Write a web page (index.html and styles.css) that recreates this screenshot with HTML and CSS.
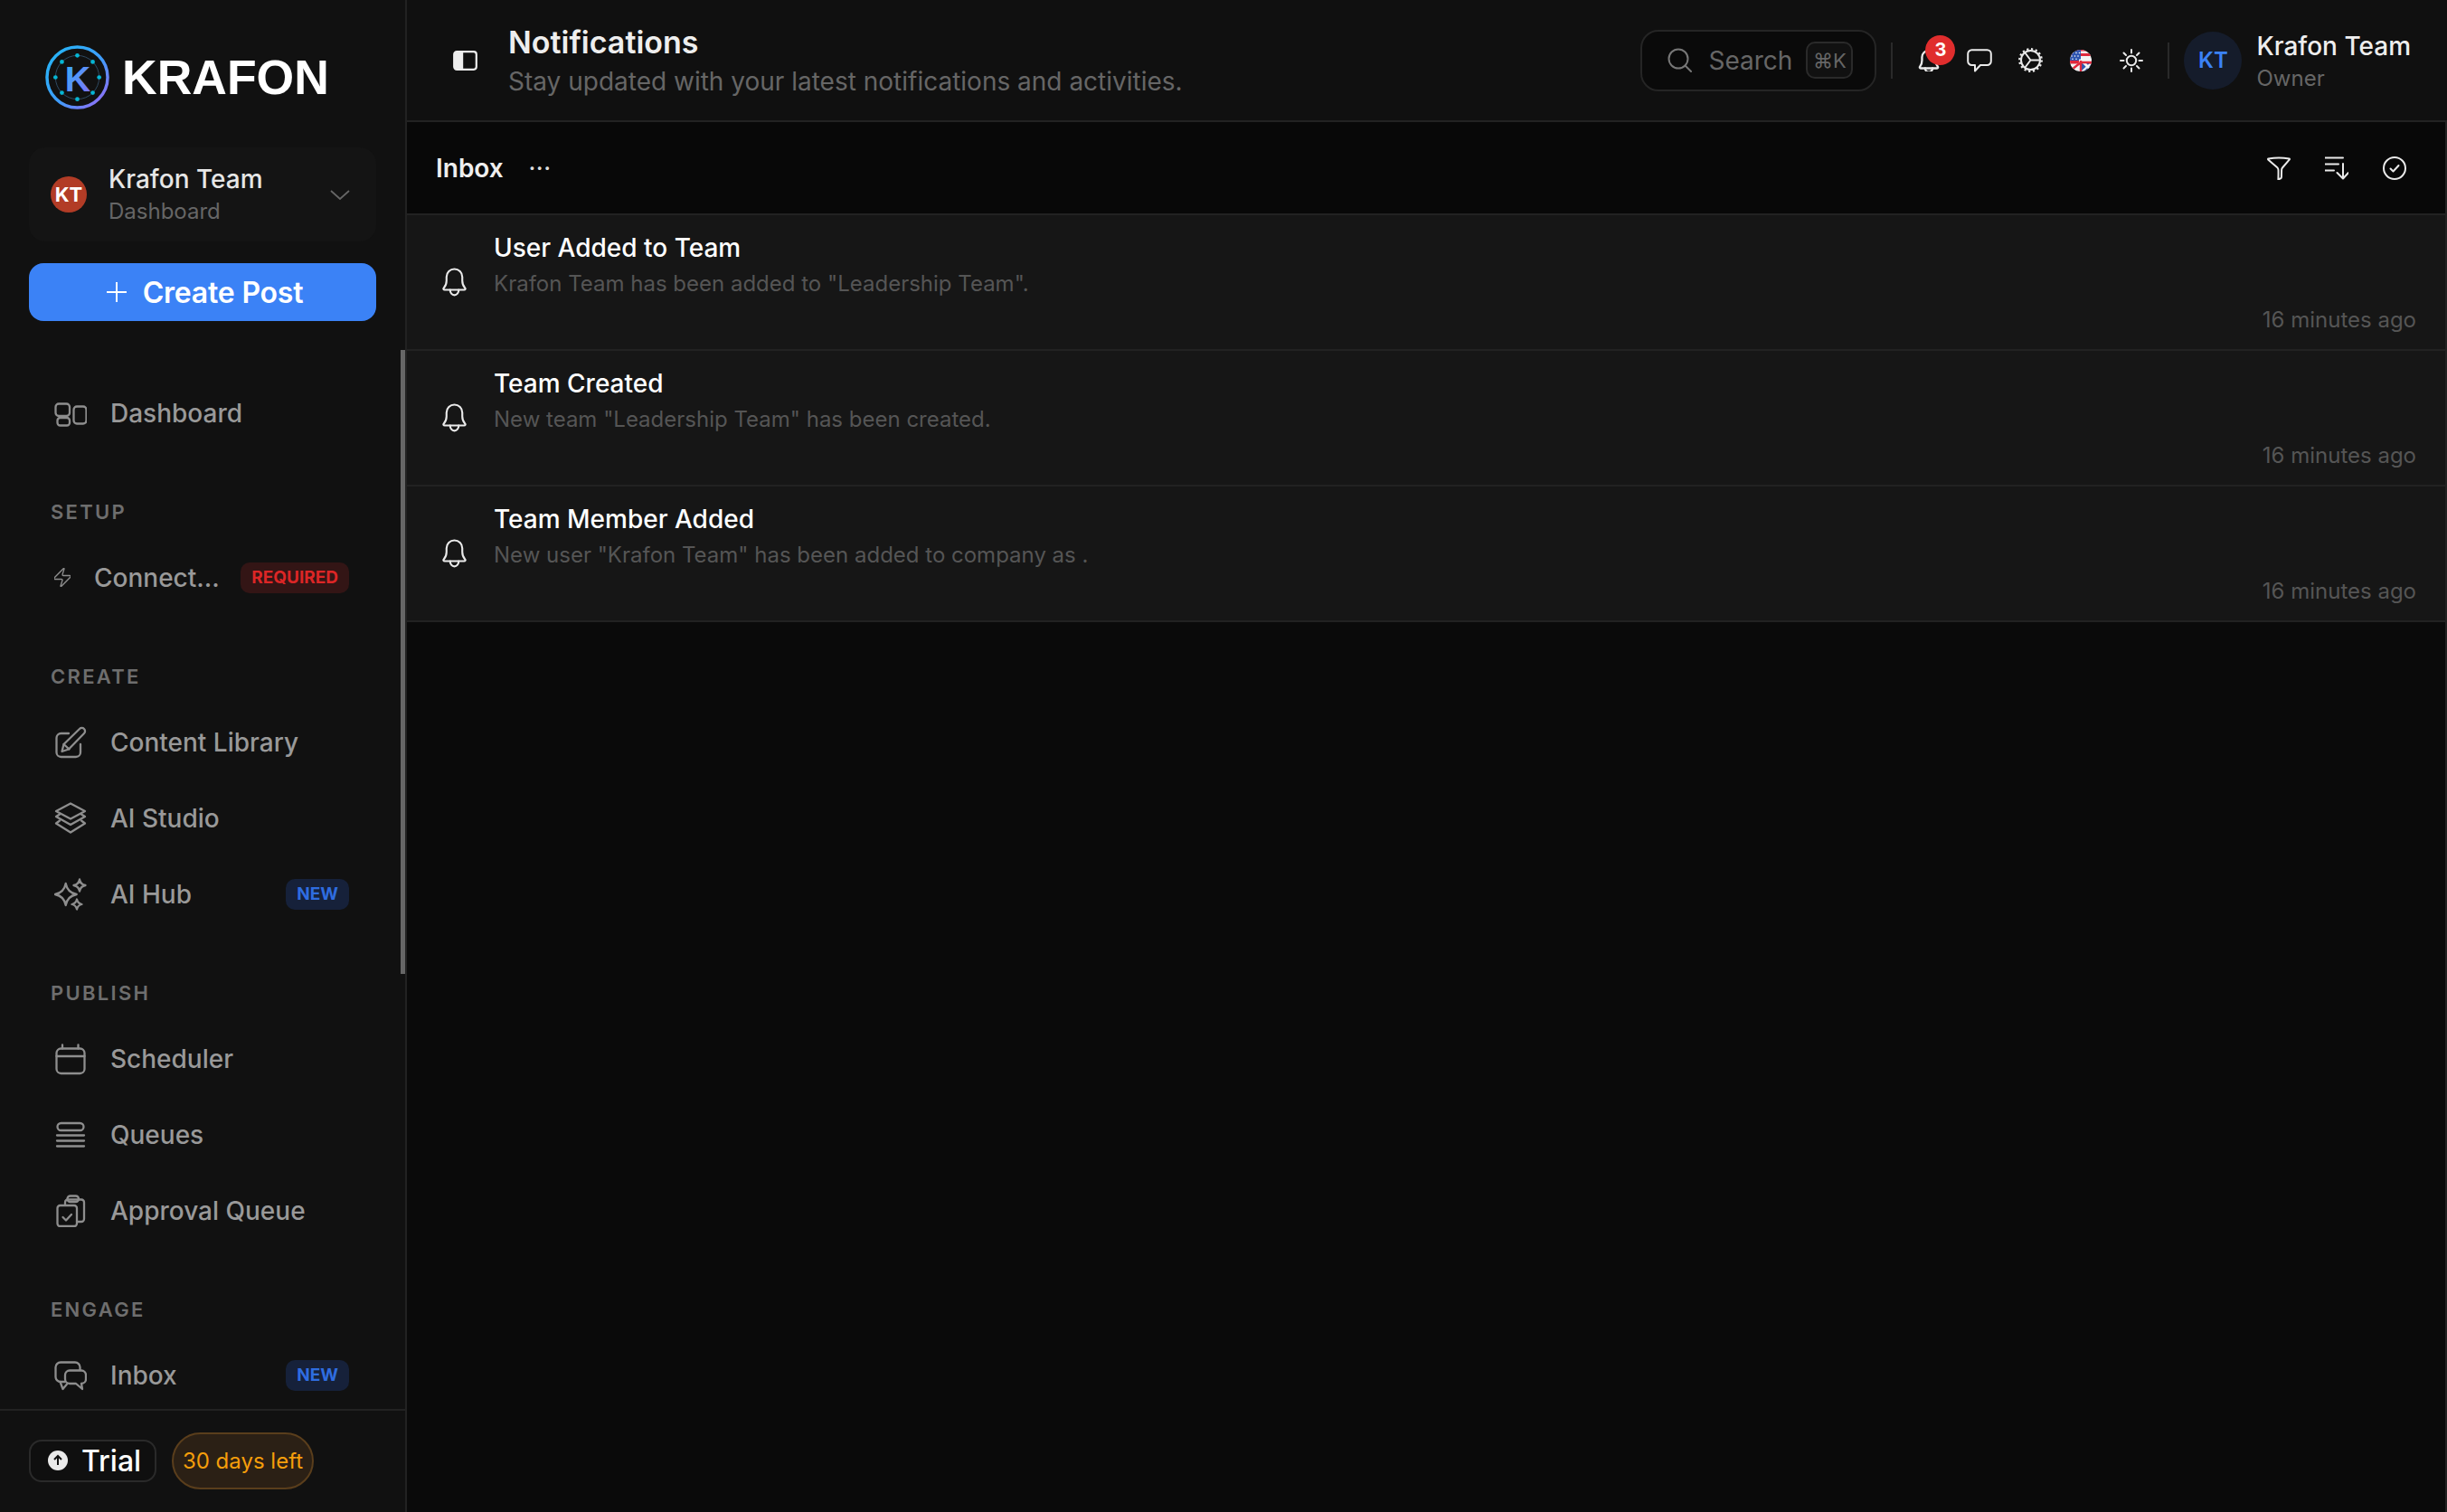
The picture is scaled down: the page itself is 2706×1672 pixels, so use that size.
FILE: index.html
```html
<!DOCTYPE html>
<html lang="en">
<head>
<meta charset="utf-8">
<title>Notifications</title>
<link rel="stylesheet" href="styles.css">
</head>
<body>
<div class="app">
  <aside class="sidebar">
    <div class="scrollbar"></div>
    <div class="brand">
      <svg class="logo" viewBox="0 0 72 72">
        <defs>
          <linearGradient id="ring" x1="0" y1="0" x2="1" y2="1"><stop offset="0" stop-color="#22b8f5"/><stop offset="0.55" stop-color="#3f9cfb"/><stop offset="1" stop-color="#a066f5"/></linearGradient>
          <linearGradient id="kay" x1="0" y1="0" x2="1" y2="1"><stop offset="0" stop-color="#2cb4f8"/><stop offset="1" stop-color="#8a6cf8"/></linearGradient>
        </defs>
        <circle cx="36" cy="36" r="34" class="logo-ring"/>
        <circle cx="36" cy="36" r="24.500" class="logo-orbit"/>
        <g class="logo-dots">
          <circle cx="36" cy="11.500" r="2.400"/><circle cx="53.300" cy="18.700" r="2.400"/><circle cx="60.500" cy="36" r="2.400"/><circle cx="53.300" cy="53.300" r="2.400"/><circle cx="36" cy="60.500" r="2.400"/><circle cx="18.700" cy="53.300" r="2.400"/><circle cx="11.500" cy="36" r="2.400"/><circle cx="18.700" cy="18.700" r="2.400"/>
        </g>
        <text x="36.500" y="52" text-anchor="middle" class="logo-k">K</text>
      </svg>
      <span class="wordmark">KRAFON</span>
    </div>
    <div class="team-card">
      <span class="team-avatar">KT</span>
      <div class="team-text">
        <div class="team-name">Krafon Team</div>
        <div class="team-sub">Dashboard</div>
      </div>
      <svg class="chevron" viewBox="0 0 22 11"><path d="M1 1l10 9 10-9"/></svg>
    </div>
    <button class="create-btn"><svg class="plus" viewBox="0 0 22 22"><path d="M11 0v22M0 11h22"/></svg>Create Post</button>
    <nav class="nav">
      <a class="nav-row">
        <svg class="nav-icon" viewBox="0 0 36 36"><rect x="1.500" y="7.500" width="15.500" height="13.500" rx="3.500"/><rect x="3.500" y="23" width="13.500" height="8.500" rx="3"/><rect x="21.500" y="10.500" width="14" height="19" rx="3.500"/></svg>
        <span>Dashboard</span>
      </a>
      <div class="nav-label">SETUP</div>
      <a class="nav-row">
        <svg class="bolt" viewBox="3 1.500 18 21"><path d="M4 14a1 1 0 0 1-.78-1.630l9.900-10.200a.5.5 0 0 1 .86.460l-1.920 6.020A1 1 0 0 0 13 10h7a1 1 0 0 1 .78 1.630l-9.900 10.200a.5.5 0 0 1-.86-.460l1.920-6.020A1 1 0 0 0 11 14z"/></svg>
        <span>Connect...</span>
        <span class="tag tag-red">REQUIRED</span>
      </a>
      <div class="nav-label">CREATE</div>
      <a class="nav-row">
        <svg class="nav-icon" viewBox="0 0 36 36"><path d="M16 8H7.500a5 5 0 0 0-5 5v16a5 5 0 0 0 5 5H24a5 5 0 0 0 5-5v-9"/><path d="M8.500 28l2-8L28 3a3.500 3.500 0 0 1 5 5L16 25.500z"/><path d="M10.500 20l6 5.500"/></svg>
        <span>Content Library</span>
      </a>
      <a class="nav-row">
        <svg class="nav-icon" viewBox="0 0 36 36"><path d="M18 1.500L34 10 18 18.500 2 10z"/><path d="M6 13.500L2 16l16 9 16-9-4-2.500"/><path d="M6 20.500L2 23.500 18 33.500l16-10-4-3"/></svg>
        <span>AI Studio</span>
      </a>
      <a class="nav-row">
        <svg class="nav-icon" viewBox="0 0 36 36"><path d="M12.700 6Q14.500 16 24.700 18 14.500 20 12.700 30 10.900 20 .9 18 10.900 16 12.700 6z"/><path d="M28 1.500Q29 7 34.500 8 29 9 28 14.500 27 9 21.500 8 27 7 28 1.500z"/><path d="M25 23.500Q26 28 30.500 29 26 30 25 34.500 24 30 19.500 29 24 28 25 23.500z"/></svg>
        <span>AI Hub</span>
        <span class="tag tag-blue">NEW</span>
      </a>
      <div class="nav-label">PUBLISH</div>
      <a class="nav-row">
        <svg class="nav-icon" viewBox="0 0 36 36"><rect x="2.500" y="6.500" width="31" height="27.500" rx="5"/><path d="M2.500 15h31M9 2.500v4M26.500 2.500v4"/></svg>
        <span>Scheduler</span>
      </a>
      <a class="nav-row">
        <svg class="nav-icon" viewBox="0 0 36 36"><rect x="3.500" y="5" width="29" height="8" rx="4"/><path d="M3 18.500h30M3 24.500h30M3 30.500h30"/></svg>
        <span>Queues</span>
      </a>
      <a class="nav-row">
        <svg class="nav-icon" viewBox="0 0 36 36"><rect x="3.500" y="12" width="21.500" height="23" rx="3"/><path d="M9.500 25l3.500 3.500 6-6.500"/><path d="M12 11.500V8.500a3 3 0 0 1 3-3h15a3 3 0 0 1 3 3V27a3 3 0 0 1-3 3h-5"/><rect x="14.500" y="1.500" width="12.500" height="6.500" rx="3.200"/></svg>
        <span>Approval Queue</span>
      </a>
      <div class="nav-label">ENGAGE</div>
      <a class="nav-row">
        <svg class="nav-icon" viewBox="0 0 36 36"><path d="M12 25H7a5.500 5.500 0 0 1-5.500-5.500V9A5.500 5.500 0 0 1 7 3.500h16A5.500 5.500 0 0 1 28.500 9v3"/><path d="M6.500 25l3 8 5-6"/><path d="M17 12.500h13a5 5 0 0 1 5 5V22a5 5 0 0 1-5 5l1 6-7-6h-7a5 5 0 0 1-5-5v-4.500a5 5 0 0 1 5-5z"/></svg>
        <span>Inbox</span>
        <span class="tag tag-blue">NEW</span>
      </a>
    </nav>
    <div class="sidebar-foot">
      <span class="trial"><svg class="trial-icon" viewBox="0 0 22 22"><circle cx="11" cy="11" r="11" class="trial-disc"/><path d="M11 16V6.500M7 10l4-4 4 4" class="trial-arrow"/></svg>Trial</span>
      <span class="days">30 days left</span>
    </div>
  </aside>
  <div class="content">
    <header class="topbar">
      <svg class="panel-icon" viewBox="0 0 27 22"><rect x="1.200" y="1.200" width="24.600" height="19.600" rx="3"/><path d="M1.200 4.200a3 3 0 0 1 3-3h7v19.600h-7a3 3 0 0 1-3-3z" class="panel-fill"/></svg>
      <div class="page-head">
        <h1 class="page-title">Notifications</h1>
        <p class="page-sub">Stay updated with your latest notifications and activities.</p>
      </div>
      <div class="top-right">
        <div class="search">
          <svg class="search-icon" viewBox="0 0 27 27"><circle cx="12" cy="12" r="10.500"/><path d="M19.500 19.500L26 26"/></svg>
          <span class="search-text">Search</span>
          <kbd class="kbd">⌘K</kbd>
        </div>
        <span class="divider"></span>
        <div class="top-icons">
          <span class="top-icon bell-wrap">
            <svg class="line-icon bell-small" viewBox="2.500 1.500 19 21.500"><path d="M3.500 18.500c1.400-1.600 2-3 2-6V9.500a6.500 6.500 0 0 1 13 0v3c0 3 .6 4.400 2 6 .5.600.2 1.500-.7 1.500H4.200c-.9 0-1.200-.9-.7-1.500z"/><path d="M8.500 20a3.500 3.500 0 0 0 7 0"/></svg>
            <span class="badge">3</span>
          </span>
          <span class="top-icon">
            <svg class="line-icon chat" viewBox="0 0 28 26"><path d="M5.500 1.200h17a4.300 4.300 0 0 1 4.300 4.300v8.200a4.300 4.300 0 0 1-4.300 4.300h-7.500l-6 6.500v-6.500H5.500a4.300 4.300 0 0 1-4.300-4.300V5.500a4.300 4.300 0 0 1 4.300-4.300z"/></svg>
          </span>
          <span class="top-icon">
            <svg class="line-icon gear" viewBox="0 0 27 27"><circle cx="13.500" cy="13.500" r="10.500"/><circle cx="13.500" cy="13.500" r="12.200" class="gear-teeth"/><path d="M13.500 13.500H24M13.500 13.500L7.500 5.500M13.500 13.500L7.500 21.500"/></svg>
          </span>
          <span class="top-icon">
            <svg class="flag" viewBox="0 0 24 24">
              <defs><clipPath id="flagclip"><circle cx="12" cy="12" r="12"/></clipPath></defs>
              <g clip-path="url(#flagclip)">
                <rect width="24" height="24" class="f-white"/>
                <rect y="4" width="24" height="3" class="f-red"/>
                <rect y="0" width="24" height="1.500" class="f-red"/>
                <rect y="12" width="24" height="3.500" class="f-red"/>
                <rect width="12" height="12" class="f-blue"/>
                <path d="M12 24L24 13H12zM24 24V16l-9 8z" class="f-blue"/>
                <path d="M10 12h14M13 12l11 11M13 12l-8 12M0 18l7 3" class="f-white-line"/>
                <path d="M12 12v12M12 14h12M12 14l-10 8" class="f-red-line"/>
                <g class="f-stars"><circle cx="3" cy="3.500" r=".8"/><circle cx="7" cy="3.500" r=".8"/><circle cx="10.500" cy="3.500" r=".8"/><circle cx="2" cy="7" r=".8"/><circle cx="5.500" cy="7" r=".8"/><circle cx="9" cy="7" r=".8"/><circle cx="3" cy="10.200" r=".8"/><circle cx="7" cy="10.200" r=".8"/></g>
              </g>
            </svg>
          </span>
          <span class="top-icon">
            <svg class="line-icon sun" viewBox="0 0 26 26"><circle cx="13" cy="13" r="5.200"/><path d="M13 1v3.500M13 21.500V25M1 13h3.500M21.500 13H25M4.500 4.500l2.500 2.500M19 19l2.500 2.500M4.500 21.500L7 19M19 7l2.500-2.500"/></svg>
          </span>
        </div>
        <span class="divider"></span>
        <div class="profile">
          <span class="profile-avatar">KT</span>
          <div class="profile-text">
            <div class="profile-name">Krafon Team</div>
            <div class="profile-role">Owner</div>
          </div>
        </div>
      </div>
    </header>
    <main class="main">
      <div class="toolbar">
        <span class="inbox-title">Inbox</span>
        <span class="inbox-more">···</span>
        <div class="tool-icons">
          <svg class="line-icon tool" viewBox="0 0 26 26"><path d="M1.500 2.500c7-1.300 16-1.300 23 0 .5.100.6.500.3.900L17 12.500c-.6.700-.9 1.500-.9 2.500l-.2 8c0 .8-.4 1.200-1.200 1.500l-2.300 1c.1-3 .2-7 .1-10.500 0-1-.3-1.700-.9-2.400L1.200 3.400c-.3-.4-.2-.8.3-.9z"/></svg>
          <svg class="line-icon tool" viewBox="0 0 26 26"><path d="M.5 1.500H20M.5 8.500H15M.5 15.500H10M20 8v16M13.500 18l6.500 6.500 6-6.500"/></svg>
          <svg class="line-icon tool" viewBox="0 0 26 26"><circle cx="13" cy="13" r="12"/><path d="M8.500 13.500l3 3 6-6.500"/></svg>
        </div>
      </div>
      <section class="note">
        <svg class="line-icon note-bell" viewBox="3 1.500 25 31"><path d="M4.500 23.500c1.800-2 2.800-4 2.800-7.500V12a8.200 8.200 0 0 1 16.400 0v4c0 3.500 1 5.500 2.800 7.500.8.900.3 2-.9 2H5.400c-1.200 0-1.700-1.100-.9-2z"/><path d="M11 25.500a4.500 5.500 0 0 0 9 0"/></svg>
        <div class="note-body">
          <div class="note-title">User Added to Team</div>
          <div class="note-desc">Krafon Team has been added to "Leadership Team".</div>
          <div class="note-time">16 minutes ago</div>
        </div>
      </section>
      <section class="note">
        <svg class="line-icon note-bell" viewBox="3 1.500 25 31"><path d="M4.500 23.500c1.800-2 2.800-4 2.800-7.500V12a8.200 8.200 0 0 1 16.400 0v4c0 3.500 1 5.500 2.800 7.500.8.900.3 2-.9 2H5.400c-1.200 0-1.700-1.100-.9-2z"/><path d="M11 25.500a4.500 5.500 0 0 0 9 0"/></svg>
        <div class="note-body">
          <div class="note-title">Team Created</div>
          <div class="note-desc">New team "Leadership Team" has been created.</div>
          <div class="note-time">16 minutes ago</div>
        </div>
      </section>
      <section class="note">
        <svg class="line-icon note-bell" viewBox="3 1.500 25 31"><path d="M4.500 23.500c1.800-2 2.800-4 2.800-7.500V12a8.200 8.200 0 0 1 16.400 0v4c0 3.500 1 5.500 2.800 7.500.8.900.3 2-.9 2H5.400c-1.200 0-1.700-1.100-.9-2z"/><path d="M11 25.500a4.500 5.500 0 0 0 9 0"/></svg>
        <div class="note-body">
          <div class="note-title">Team Member Added</div>
          <div class="note-desc">New user "Krafon Team" has been added to company as .</div>
          <div class="note-time">16 minutes ago</div>
        </div>
      </section>
    </main>
  </div>
</div>
</body>
</html>
```
FILE: styles.css
```css
* { box-sizing: border-box; }
html, body { margin: 0; height: 100%; background: #0a0a0a; }
body { font-family: Inter, "Noto Sans", "DejaVu Sans", sans-serif; overflow: hidden; }
.app { display: flex; height: 1672px; width: 2706px; }

/* Sidebar */
.sidebar { position: relative; width: 450px; flex: none; display: flex; flex-direction: column; background: #111; border-right: 2px solid #222; }
.scrollbar { position: absolute; right: 0; top: 387px; width: 5px; height: 690px; background: #666; }
.brand { display: flex; align-items: center; gap: 14px; padding: 50px 0 0 50px; height: 121px; }
.logo { width: 71px; height: 71px; flex: none; }
.logo-ring { fill: none; stroke: url(#ring); stroke-width: 3.500; }
.logo-orbit { fill: none; stroke: #2f4a63; stroke-width: 1; }
.logo-dots circle { fill: #06b6d4; }
.logo-k { font-family: "Liberation Sans", Arial, sans-serif; font-weight: 700; font-size: 40px; fill: url(#kay); }
.wordmark { font-family: "Liberation Sans", Arial, sans-serif; font-weight: 700; font-size: 53.500px; line-height: 71px; color: #fff; }

.team-card { display: flex; align-items: center; margin: 42px 32px 0 32px; height: 104px; padding: 0 29px 0 24px; background: #141414; border-radius: 18px; }
.team-avatar { width: 40px; height: 40px; border-radius: 50%; flex: none; background: #b23c26; color: #fff; font-weight: 700; font-size: 22px; display: flex; align-items: center; justify-content: center; }
.team-text { flex: 1; margin-left: 24px; padding-top: 1px; }
.team-name { font-size: 28px; font-weight: 500; color: #e6e6e6; line-height: 36px; }
.team-sub { font-size: 24px; color: #666; line-height: 35px; }
.chevron { width: 22px; height: 11px; fill: none; stroke: #666; stroke-width: 1.800; }

.create-btn { margin: 24px 32px 0 32px; height: 64px; flex: none; display: flex; align-items: center; justify-content: center; gap: 18px; border: 0; border-radius: 16px; background: #3b82f6; color: #fff; font-family: inherit; font-size: 32px; letter-spacing: -.2px; font-weight: 600; padding: 0 0 0 5px; }
.plus { width: 22px; height: 22px; fill: none; stroke: #fff; stroke-width: 2; }

.nav { flex: 1; min-height: 0; overflow: hidden; padding-top: 60px; }
.nav-row { display: flex; align-items: center; height: 84px; padding: 0 62px 0 60px; gap: 27px; font-size: 28px; font-weight: 500; color: #999; }
.nav-row > span:first-of-type { flex: 1; min-width: 0; margin-left: -1px; }
.nav-icon { width: 36px; height: 36px; flex: none; fill: none; stroke: #8e8e8e; stroke-width: 2.300; stroke-linejoin: round; stroke-linecap: round; }
.bolt { width: 18px; height: 21px; flex: none; fill: none; stroke: #8e8e8e; stroke-width: 1.400; stroke-linejoin: round; }
.nav-label { height: 36px; margin: 48.700px 0 13.300px; padding-left: 56px; font-size: 22px; line-height: 36px; font-weight: 600; letter-spacing: 2.300px; color: #6e6e6e; }
.nav-row .tag { flex: none; height: 34px; padding: 0 12px; border-radius: 10px; font-size: 19px; font-weight: 700; line-height: 34px; }
.tag-red { background: #331515; color: #dc2626; }
.tag-blue { background: #16213a; color: #2f6de0; }

.sidebar-foot { height: 114px; flex: none; border-top: 2px solid #222; display: flex; align-items: center; gap: 17px; padding: 0 0 2px 32px; }
.trial { display: flex; align-items: center; gap: 15px; height: 47px; width: 141px; padding-left: 19px; border: 2px solid #2a2a2a; border-radius: 14px; background: #0f0f0f; color: #fff; font-size: 32px; font-weight: 500; }
.trial-icon { width: 22px; height: 22px; flex: none; }
.trial-disc { fill: #eaeaea; }
.trial-arrow { fill: none; stroke: #111; stroke-width: 2; }
.days { height: 63px; width: 157px; display: flex; align-items: center; justify-content: center; border: 2px solid #5a3e1c; border-radius: 32px; background: #2b2015; color: #f59e0b; font-size: 24px; }

/* Main column */
.content { flex: 1; min-width: 0; display: flex; flex-direction: column; }
.topbar { height: 135px; flex: none; display: flex; align-items: center; padding: 0 40px 0 51px; background: #101010; border-bottom: 2px solid #222; }
.panel-icon { width: 27px; height: 22px; flex: none; fill: none; stroke: #eee; stroke-width: 2.200; }
.panel-fill { fill: #eee; stroke: none; }
.page-head { margin-left: 34px; }
.page-title { margin: 0; font-size: 34px; line-height: 46px; font-weight: 600; color: #eee; }
.page-sub { margin: 0; font-size: 28px; line-height: 40px; color: #666; }
.top-right { margin-left: auto; display: flex; align-items: center; }
.search { width: 261px; height: 68px; display: flex; align-items: center; padding: 0 24px 0 28px; background: #0a0a0a; border: 2px solid #252525; border-radius: 20px; }
.search-icon { width: 27px; height: 27px; flex: none; fill: none; stroke: #777; stroke-width: 2; stroke-linecap: round; }
.search-text { margin-left: 18px; font-size: 28px; color: #666; }
.kbd { margin-left: auto; width: 52px; height: 41px; flex: none; display: flex; align-items: center; justify-content: center; border: 2px solid #2a2a2a; border-radius: 10px; background: #111; color: #666; font-family: Inter, "DejaVu Sans", sans-serif; font-size: 22px; }
.divider { width: 2px; height: 40px; background: #2a2a2a; flex: none; margin: 0 16px; }
.top-icons { display: flex; margin: 0 -4px; }
.top-icon { position: relative; width: 56px; height: 40px; display: flex; align-items: center; justify-content: center; }
.line-icon { fill: none; stroke: #eaeaea; stroke-width: 2; stroke-linecap: round; stroke-linejoin: round; flex: none; }
.bell-small { width: 24px; height: 25px; }
.badge { position: absolute; left: 24px; top: -8px; width: 33px; height: 33px; border-radius: 50%; background: #e02d2d; color: #fff; font-size: 20px; font-weight: 700; display: flex; align-items: center; justify-content: center; }
.chat { width: 28px; height: 26px; }
.gear { width: 27px; height: 27px; }
.gear-teeth { stroke-width: 2.400; stroke-dasharray: 2.200 2.600; stroke-linecap: butt; }
.flag { width: 24px; height: 24px; }
.f-white { fill: #f4f4f4; }
.f-red { fill: #e0283c; }
.f-blue { fill: #2f55b0; }
.f-white-line { fill: none; stroke: #f4f4f4; stroke-width: 3; }
.f-red-line { fill: none; stroke: #e0283c; stroke-width: 2.400; }
.f-stars { fill: #fff; }
.sun { width: 26px; height: 26px; }
.profile { display: flex; align-items: center; gap: 16px; }
.profile-avatar { width: 64px; height: 64px; border-radius: 50%; background: #151c2b; color: #3b82f6; font-size: 24px; font-weight: 600; display: flex; align-items: center; justify-content: center; flex: none; }
.profile-text { margin-top: 3px; }
.profile-name { font-size: 28px; line-height: 36px; font-weight: 500; color: #eee; }
.profile-role { font-size: 24px; line-height: 35px; color: #666; }

.main { flex: 1; min-height: 0; background: #0a0a0a; border-right: 2px solid #222; }
.toolbar { height: 103px; display: flex; align-items: center; padding: 0 43px 0 32px; background: #080808; border-bottom: 2px solid #222; }
.inbox-title { font-size: 28px; font-weight: 600; color: #eee; }
.inbox-more { margin-left: 28px; color: #ddd; font-size: 22px; font-weight: 700; letter-spacing: 1px; }
.tool-icons { margin-left: auto; display: flex; gap: 38px; }
.tool { width: 26px; height: 26px; }
.note { height: 150px; display: flex; align-items: center; padding: 0 32px 2px 37px; background: #161616; border-bottom: 2px solid #222; }
.note-bell { width: 31px; height: 33px; }
.note-body { flex: 1; margin: 5px 0 0 28px; }
.note-title { font-size: 28px; line-height: 40px; font-weight: 500; color: #fff; }
.note-desc { font-size: 24px; line-height: 40px; color: #555; }
.note-time { font-size: 24px; line-height: 40px; color: #555; text-align: right; }
```
